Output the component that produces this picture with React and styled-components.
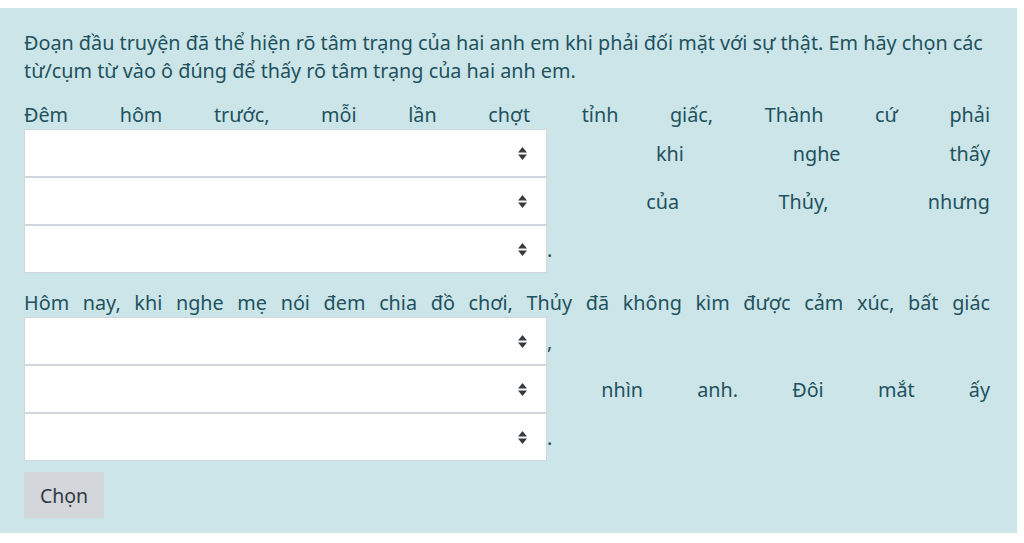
import { createGlobalStyle, styled } from 'styled-components';

const GlobalStyle = createGlobalStyle`
  body {
    margin: 0;
    background: #ffffff;
    font-family: "Noto Sans", "Open Sans", sans-serif;
  }
`;

function ChoiceSelect() {
  return (
    <StSelectWrap>
      <StSelect defaultValue="">
        <option value=""></option>
      </StSelect>
      <svg width="9" height="15" viewBox="0 0 9 15" aria-hidden="true">
        <path d="M0 6.5 L4.5 1 L9 6.5 Z" fill="#343a40" />
        <path d="M0 8.5 L9 8.5 L4.5 14 Z" fill="#343a40" />
      </svg>
    </StSelectWrap>
  );
}

export default function App() {
  return (
    <>
      <GlobalStyle />
      <StPanel>
        <StIntro>
          Đoạn đầu truyện đã thể hiện rõ tâm trạng của hai anh em khi phải đối mặt với sự thật. Em hãy
          chọn các từ/cụm từ vào ô đúng để thấy rõ tâm trạng của hai anh em.
        </StIntro>
        <StPassage>
          Đêm hôm trước, mỗi lần chợt tỉnh giấc, Thành cứ phải <ChoiceSelect /> khi nghe thấy{' '}
          <ChoiceSelect /> của Thủy, nhưng <ChoiceSelect />.
        </StPassage>
        <StPassage>
          Hôm nay, khi nghe mẹ nói đem chia đồ chơi, Thủy đã không kìm được cảm xúc, bất giác{' '}
          <ChoiceSelect />, <ChoiceSelect /> nhìn anh. Đôi mắt ấy <ChoiceSelect />.
        </StPassage>
        <StButton type="button">Chọn</StButton>
      </StPanel>
    </>
  );
}

const StPanel = styled.div`
  margin-top: 8px;
  width: 1017px;
  box-sizing: border-box;
  padding: 21px 27px 15px 24px;
  background-color: #cce5e9;
  color: #22525d;
  font-size: 19.8px;
  line-height: 28px;
`;

const StIntro = styled.p`
  margin: 0 -12px 16px 0;
`;

const StPassage = styled.p`
  margin: 0 0 16px;
  text-align: justify;

  &:last-of-type {
    margin-bottom: 11px;
  }
`;

const StSelectWrap = styled.span`
  position: relative;
  display: inline-block;
  overflow: hidden;
  width: 523px;
  height: 48px;
  vertical-align: -16px;

  svg {
    position: absolute;
    top: 17px;
    right: 20px;
    pointer-events: none;
  }
`;

const StSelect = styled.select`
  display: block;
  width: 100%;
  height: 100%;
  box-sizing: border-box;
  margin: 0;
  padding: 0 12px;
  border: 1px solid #d2d6da;
  border-radius: 0;
  background: #ffffff;
  appearance: none;
  font: inherit;
  color: #495057;
`;

const StButton = styled.button`
  display: block;
  width: 80px;
  height: 46px;
  padding: 0;
  border: none;
  border-radius: 0;
  background-color: #d3d6db;
  color: #333a40;
  font-family: inherit;
  font-size: 19.5px;
`;
